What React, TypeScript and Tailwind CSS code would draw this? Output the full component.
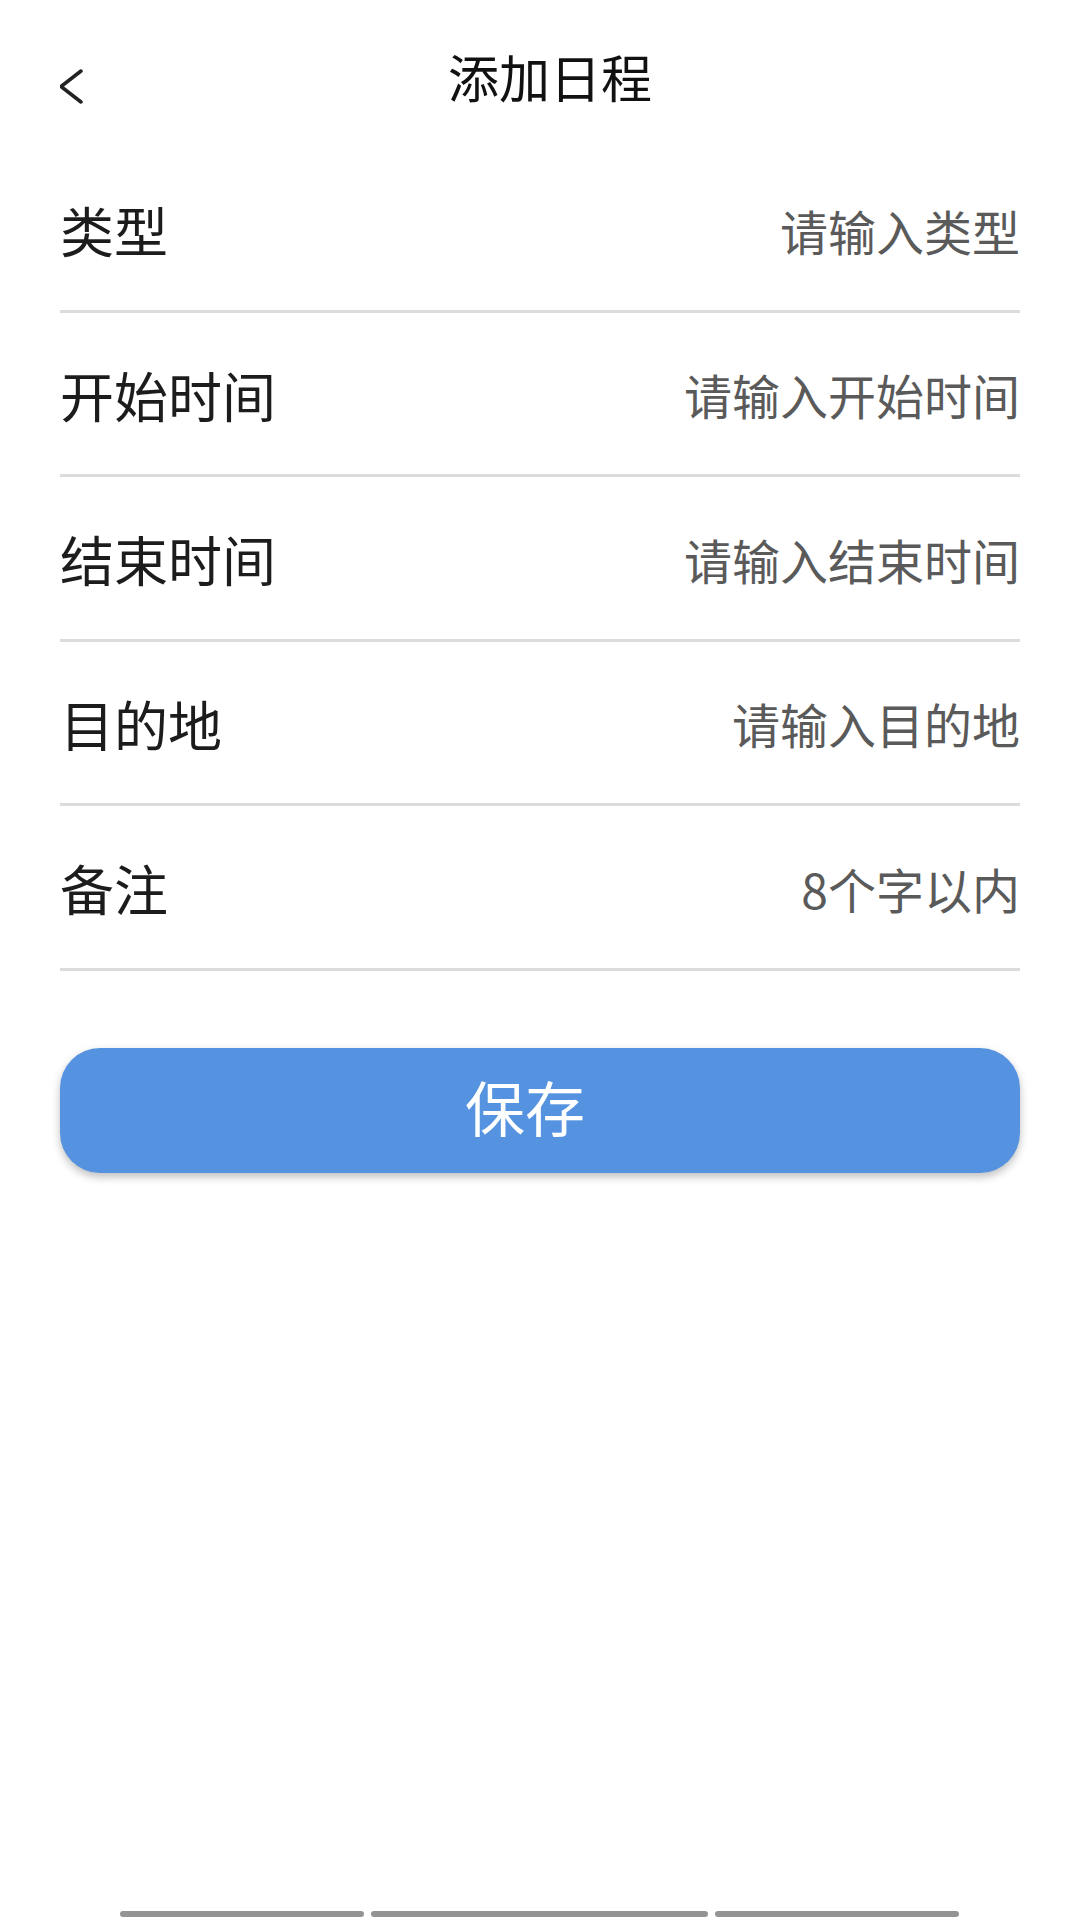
import React from 'react'

const rows = [
	{ label: '类型', placeholder: '请输入类型' },
	{ label: '开始时间', placeholder: '请输入开始时间' },
	{ label: '结束时间', placeholder: '请输入结束时间' },
	{ label: '目的地', placeholder: '请输入目的地' },
	{ label: '备注', placeholder: '8个字以内' },
]

const font = { fontFamily: '"Noto Sans CJK SC", "Noto Sans", sans-serif' }

const App = () => {
	return (
		<div className="min-h-[1920px] w-[1080px] bg-white flex flex-col" style={font}>
			<Header />
			<div className="px-[60px]">
				{rows.map((r) => (
					<FormRow key={r.label} label={r.label} placeholder={r.placeholder} />
				))}
			</div>
			<div className="px-[60px] mt-[77px]">
				<button className="w-full h-[125px] rounded-[40px] bg-[#5593e0] text-white text-[60px] leading-none pr-[30px] pb-[8px] shadow-[0_4px_8px_rgba(0,0,0,0.25)]">
					保存
				</button>
			</div>
			<div className="flex-1" />
			<NavBars />
		</div>
	)
}

const Header = () => {
	return (
		<div className="h-[148px] px-[60px] pt-[46px] flex items-start">
			<div className="w-[20px] mt-[23px]">
				<svg width="24" height="36" viewBox="0 0 24 36" fill="none">
					<polyline points="21,2 1,17.5 21,33" stroke="#222" strokeWidth="3.5" strokeLinecap="round" strokeLinejoin="round" />
				</svg>
			</div>
			<div className="flex-1 text-center text-[51px] leading-[60px] text-[#111]">添加日程</div>
		</div>
	)
}

const FormRow = ({ label, placeholder }: { label: string; placeholder: string }) => {
	return (
		<div className="h-[164.5px] flex items-center justify-between border-b-[3px] border-[#dcdcdc]">
			<div className="text-[54px] text-[#1c1c1c] pt-[2px]">{label}</div>
			<div className="text-[48px] text-[#5a5a5a] pt-[2px]">{placeholder}</div>
		</div>
	)
}

const NavBars = () => {
	return (
		<div className="flex justify-start pl-[120px] gap-[7px] pb-[3px]">
			<div className="w-[244px] h-[6px] rounded-full bg-[#949494]" />
			<div className="w-[337px] h-[6px] rounded-sm bg-[#949494]" />
			<div className="w-[244px] h-[6px] rounded-full bg-[#949494]" />
		</div>
	)
}

export default App
